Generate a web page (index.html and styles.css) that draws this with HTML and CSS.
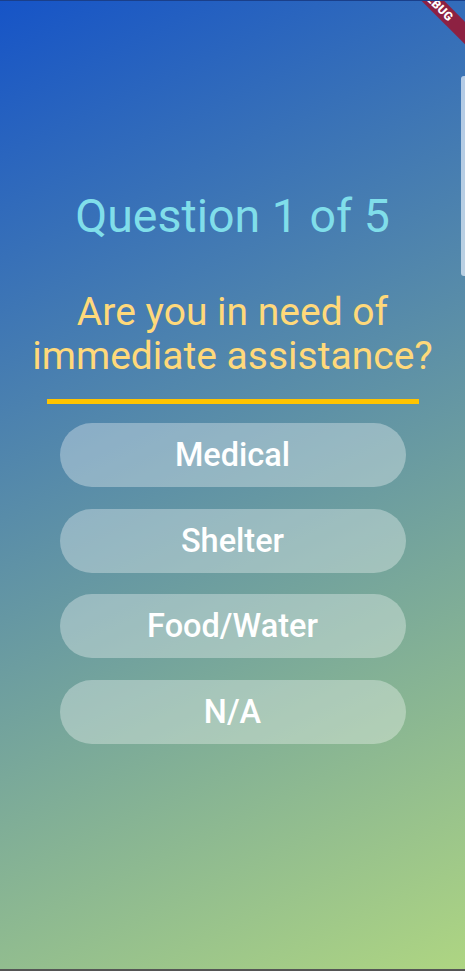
FILE: index.html
```html
<!DOCTYPE html>
<html lang="en">
<head>
    <meta charset="UTF-8">
    <meta name="viewport" content="width=device-width, initial-scale=1.0">
    <title>Quiz</title>
    <link rel="stylesheet" href="styles.css">
</head>
<body>

<div class="screen">
    <div class="debug-banner">DEBUG</div>
    <div class="side-handle"></div>

    <div class="quiz">
        <h1 class="counter">Question 1 of 5</h1>
        <p class="question">Are you in need of immediate assistance?</p>
        <div class="divider"></div>

        <!-- answer options -->
        <div class="answers">
            <button class="answer">Medical</button>
            <button class="answer">Shelter</button>
            <button class="answer">Food/Water</button>
            <button class="answer">N/A</button>
        </div>
    </div>
</div>

</body>
</html>
```

FILE: styles.css
```css
body {
    margin: 0;
    padding: 0;
    font-family: Roboto, "Noto Sans", Arial, sans-serif;
    background: #555;
}

.screen {
    position: relative;
    height: 968px;
    overflow: hidden;
    border-top: 1px solid #1a3f8a;
    background: linear-gradient(154.4deg, #1654c7 0%, #aed582 100%);
}

/* debug ribbon in the corner, clipped by the screen */
.debug-banner {
    position: absolute;
    top: -4px;
    left: 377px;
    width: 120px;
    height: 16px;
    line-height: 16px;
    transform: rotate(45deg);
    background-color: #8d2142;
    color: white;
    font-size: 12px;
    font-weight: 900;
    text-align: center;
    letter-spacing: 0.3px;
}

.side-handle {
    position: absolute;
    top: 75px;
    right: 0;
    width: 4px;
    height: 200px;
    border-radius: 3px 0 0 3px;
    background-color: rgba(220, 232, 245, 0.75);
}

.quiz {
    display: flex;
    flex-direction: column;
    align-items: center;
    padding-top: 187px;
}

.counter {
    margin: 0;
    color: #80deea;
    font-size: 46.5px;
    font-weight: 400;
    line-height: 56px;
}

.question {
    margin: 46px 0 0;
    color: #ffd97a;
    font-size: 39px;
    line-height: 44px;
    text-align: center;
}

.divider {
    width: 80%;
    height: 5px;
    margin-top: 21px;
    background-color: #ffc400;
}

.answers {
    display: flex;
    flex-direction: column;
    gap: 21.5px;
    margin-top: 19px;
}

.answer {
    width: 346px;
    height: 64px;
    border: none;
    border-radius: 32px;
    background-color: rgba(255, 255, 255, 0.33);
    color: white;
    font-family: Roboto, "Noto Sans", Arial, sans-serif;
    font-size: 32.5px;
    font-weight: 500;
    cursor: pointer;
}
```
